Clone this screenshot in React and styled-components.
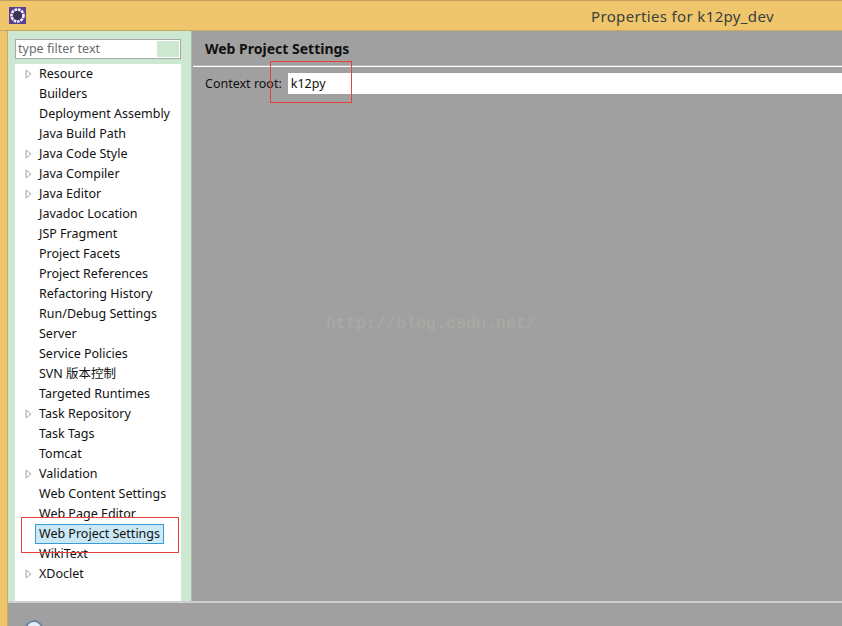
import styled, { createGlobalStyle } from "styled-components";

const UI_FONT = `"Noto Sans", "Noto Sans CJK SC", sans-serif`;

const TREE_ITEMS = [
    { label: "Resource", arrow: true },
    { label: "Builders" },
    { label: "Deployment Assembly" },
    { label: "Java Build Path" },
    { label: "Java Code Style", arrow: true },
    { label: "Java Compiler", arrow: true },
    { label: "Java Editor", arrow: true },
    { label: "Javadoc Location" },
    { label: "JSP Fragment" },
    { label: "Project Facets" },
    { label: "Project References" },
    { label: "Refactoring History" },
    { label: "Run/Debug Settings" },
    { label: "Server" },
    { label: "Service Policies" },
    { label: "SVN 版本控制" },
    { label: "Targeted Runtimes" },
    { label: "Task Repository", arrow: true },
    { label: "Task Tags" },
    { label: "Tomcat" },
    { label: "Validation", arrow: true },
    { label: "Web Content Settings" },
    { label: "Web Page Editor" },
    { label: "Web Project Settings", selected: true },
    { label: "WikiText" },
    { label: "XDoclet", arrow: true },
];

const App = () => {
    return (
        <>
            <GlobalStyle />
            <Window>
                <TitleBar>
                    <AppIcon viewBox="0 0 17 17">
                        <rect width="17" height="17" fill="#5b3f94" />
                        <circle cx="8.5" cy="8.5" r="6" fill="none" stroke="#f4f4f4" strokeWidth="2.6" strokeDasharray="2.6 0.9" />
                        <circle cx="8.5" cy="8.5" r="4.4" fill="#3a3355" />
                    </AppIcon>
                    <Title>Properties for k12py_dev</Title>
                </TitleBar>
                <Body>
                    <Content>
                        <Sidebar>
                            <Filter>
                                <FilterText>type filter text</FilterText>
                                <FilterClear />
                            </Filter>
                            <Tree>
                                {TREE_ITEMS.map((item) => (
                                    <TreeRow key={item.label}>
                                        <Twisty>
                                            {item.arrow && (
                                                <svg width="7" height="10" viewBox="0 0 7 10">
                                                    <path d="M1 1 L6 5 L1 9 Z" fill="#fff" stroke="#a6a6a6" />
                                                </svg>
                                            )}
                                        </Twisty>
                                        <TreeLabel $selected={item.selected}>{item.label}</TreeLabel>
                                    </TreeRow>
                                ))}
                                <TreeMark />
                            </Tree>
                        </Sidebar>
                        <Main>
                            <PageHeader>Web Project Settings</PageHeader>
                            <FormRow>
                                <FieldLabel>Context root:</FieldLabel>
                                <FieldValue>k12py</FieldValue>
                                <FieldMark />
                            </FormRow>
                            <Watermark>http://blog.csdn.net/</Watermark>
                        </Main>
                    </Content>
                    <Footer>
                        <HelpIcon />
                    </Footer>
                </Body>
            </Window>
        </>
    );
};
export default App;

const GlobalStyle = createGlobalStyle`
    html, body {
        margin: 0;
        padding: 0;
        background: #efc66b;
    }
`;
const Window = styled.div`
    width: 842px;
    height: 626px;
    overflow: hidden;
    display: flex;
    flex-direction: column;
    font-family: ${UI_FONT};
    font-size: 12.5px;
    color: #111;
    background: #efc66b;
`;
const TitleBar = styled.div`
    height: 31px;
    flex: none;
    box-sizing: border-box;
    border-top: 1px solid #c2a25a;
    border-bottom: 1px solid #c9a862;
    display: flex;
    align-items: center;
    padding-left: 9px;
`;
const AppIcon = styled.svg`
    width: 17px;
    height: 17px;
    flex: none;
`;
const Title = styled.div`
    margin-left: 565px;
    font-size: 15px;
    letter-spacing: 0.35px;
    color: #3a3f3f;
`;
const Body = styled.div`
    flex: 1;
    min-height: 0;
    margin-left: 7px;
    border-left: 1px solid #c9a862;
    display: flex;
    flex-direction: column;
    background: #a0a0a0;
`;
const Content = styled.div`
    flex: 1;
    min-height: 0;
    display: flex;
`;
const Sidebar = styled.div`
    width: 184px;
    flex: none;
    box-sizing: border-box;
    padding: 8px 10px 0 7px;
    display: flex;
    flex-direction: column;
    gap: 5px;
    background: #cde8d0;
    border-right: 1px solid #a8b8aa;
`;
const Filter = styled.div`
    height: 20px;
    flex: none;
    box-sizing: border-box;
    border: 1px solid #a8a8a8;
    background: #fff;
    display: flex;
    align-items: center;
    justify-content: space-between;
    padding: 1px 1px 1px 2px;
`;
const FilterText = styled.div`
    color: #6d6d6d;
    line-height: 16px;
`;
const FilterClear = styled.div`
    width: 22px;
    height: 100%;
    background: #cde8d0;
`;
const Tree = styled.div`
    position: relative;
    flex: 1;
    background: #fff;
    display: flex;
    flex-direction: column;
`;
const TreeRow = styled.div`
    height: 20px;
    flex: none;
    display: flex;
    align-items: center;
`;
const Twisty = styled.div`
    width: 20px;
    margin-left: 4px;
    flex: none;
    display: flex;
    align-items: center;
    padding-left: 6px;
    box-sizing: border-box;
`;
const TreeLabel = styled.div`
    white-space: nowrap;
    line-height: 18px;
    padding: 0 3px;
    margin-left: -4px;
    border: 1px solid ${(props) => (props.$selected ? "#3a9bd6" : "transparent")};
    background: ${(props) => (props.$selected ? "#cbe8f6" : "transparent")};
`;
const TreeMark = styled.div`
    position: absolute;
    left: 6px;
    top: 453px;
    width: 158px;
    height: 36px;
    box-sizing: border-box;
    border: 1px solid #e8403c;
`;
const Main = styled.div`
    position: relative;
    flex: 1;
    min-width: 0;
    margin-left: 1px;
    padding-top: 8px;
    display: flex;
    flex-direction: column;
`;
const PageHeader = styled.div`
    height: 28px;
    flex: none;
    box-sizing: border-box;
    padding-left: 12px;
    font-weight: 700;
    font-size: 14px;
    line-height: 20px;
    color: #111;
    border-bottom: 1px solid #fff;
    box-shadow: inset 0 -1px 0 #b8b8b8;
`;
const FormRow = styled.div`
    position: relative;
    margin-top: 6px;
    padding-left: 12px;
    display: flex;
    align-items: center;
    gap: 6px;
`;
const FieldLabel = styled.div`
    white-space: nowrap;
`;
const FieldValue = styled.div`
    flex: 1;
    height: 21px;
    line-height: 21px;
    padding-left: 3px;
    background: #fff;
`;
const FieldMark = styled.div`
    position: absolute;
    left: 77px;
    top: -12px;
    width: 82px;
    height: 42px;
    box-sizing: border-box;
    border: 1px solid #e8403c;
`;
const Watermark = styled.div`
    position: absolute;
    left: 133px;
    top: 283px;
    font-family: "Liberation Mono", monospace;
    font-size: 16.67px;
    color: #ababa5;
`;
const Footer = styled.div`
    height: 25px;
    flex: none;
    box-sizing: border-box;
    border-top: 2px solid #cfcfcf;
    overflow: hidden;
`;
const HelpIcon = styled.div`
    width: 18px;
    height: 18px;
    margin: 17px 0 0 17px;
    box-sizing: border-box;
    border: 2px solid #6d84a8;
    border-radius: 50%;
    background: #e6edf4;
`;
